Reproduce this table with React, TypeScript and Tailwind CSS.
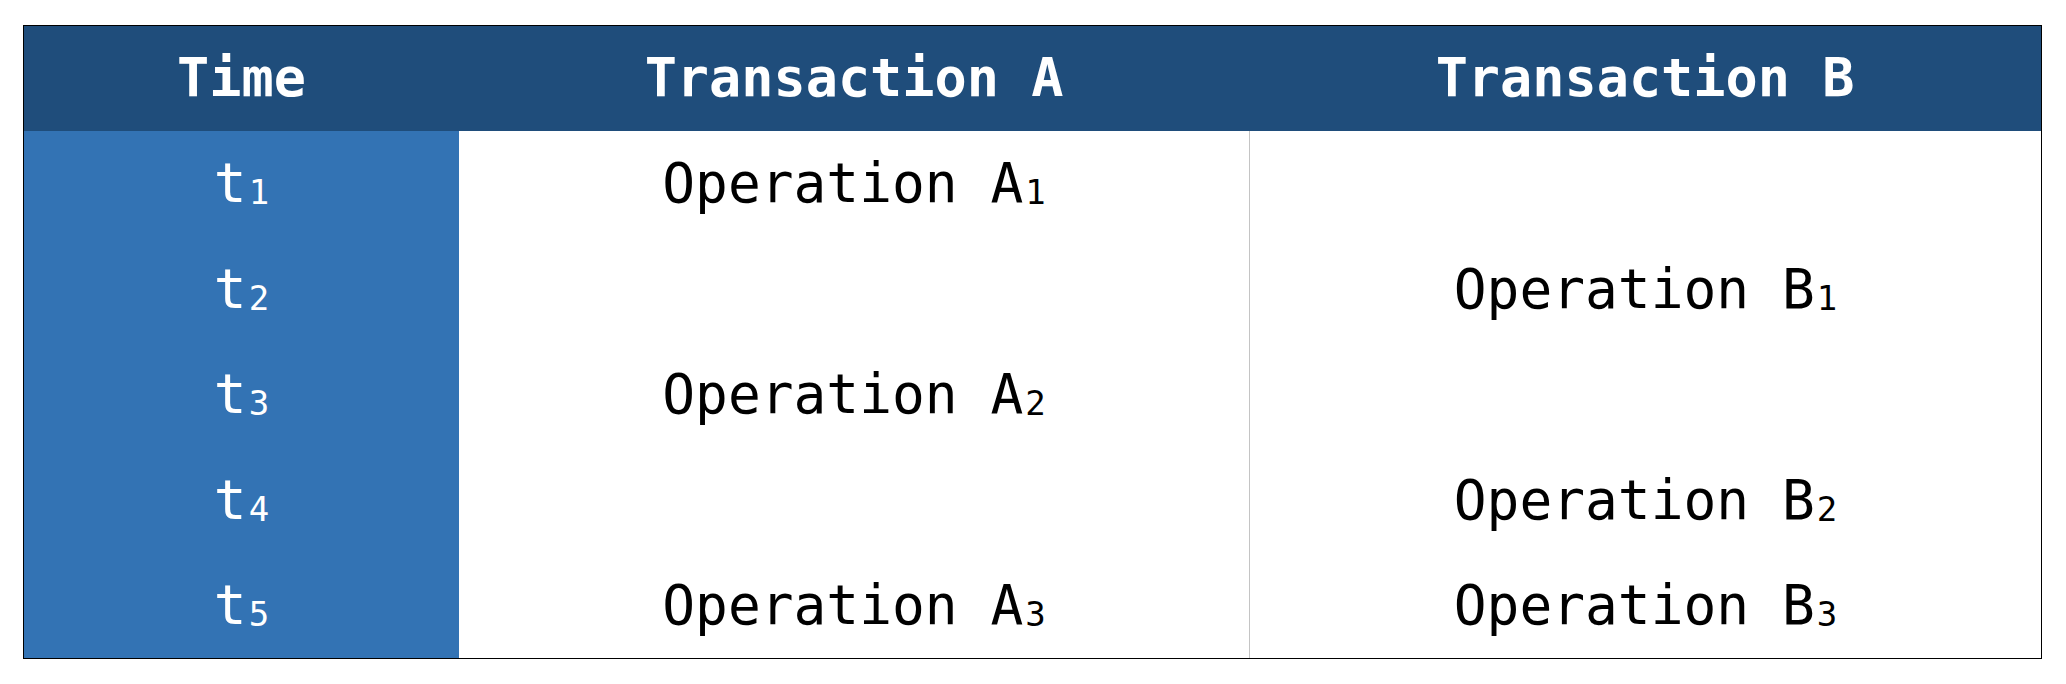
const rows = [
  { t: "1", a: "1", b: "" },
  { t: "2", a: "", b: "1" },
  { t: "3", a: "2", b: "" },
  { t: "4", a: "", b: "2" },
  { t: "5", a: "3", b: "3" },
];

function Sub({ base, n }: { base: string; n: string }) {
  return (
    <span className="text-[54.5px] leading-none whitespace-pre">
      {base}
      <span className="ml-[2px] align-[-2px] text-[34px]">{n}</span>
    </span>
  );
}

export default function App() {
  return (
    <main className="min-h-screen bg-white pl-[23px] pt-[25px]">
      <div className="w-[2019px] border border-black font-['DejaVu_Sans_Mono',monospace] text-[53.5px]">
        <div className="grid grid-cols-[435px_790px_1fr]">
          {/* Header */}
          {["Time", "Transaction A", "Transaction B"].map((h) => (
            <div
              key={h}
              className="flex h-[105px] items-center justify-center bg-[#1f4d7b] font-bold text-white"
            >
              {h}
            </div>
          ))}

          {/* Body rows */}
          {rows.map((r) => (
            <div key={r.t} className="contents">
              <div className="flex h-[105.4px] items-center justify-center bg-[#3373b4] text-white">
                <Sub base="t" n={r.t} />
              </div>
              <div className="flex h-[105.4px] items-center justify-center text-black">
                {r.a && <Sub base="Operation A" n={r.a} />}
              </div>
              <div className="flex h-[105.4px] items-center justify-center border-l border-[#c4c4c4] text-black">
                {r.b && <Sub base="Operation B" n={r.b} />}
              </div>
            </div>
          ))}
        </div>
      </div>
    </main>
  );
}
